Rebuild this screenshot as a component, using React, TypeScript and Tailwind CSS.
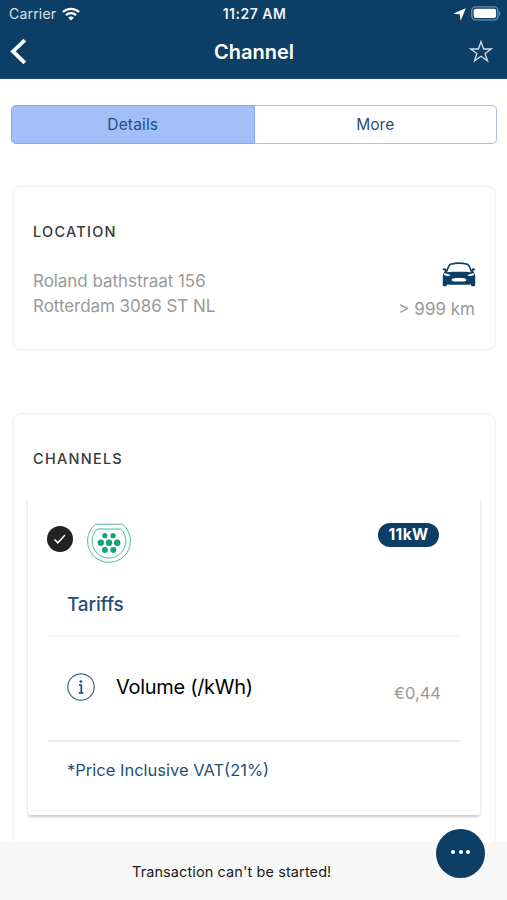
import React from 'react';

const WifiIcon = () => (
  <svg width="18" height="14" viewBox="0 0 18 14" fill="none" stroke="white" strokeWidth="2.3">
    <path d="M0.9 5C5.4 0.7 12.6 0.7 17.1 5" />
    <path d="M3.9 8.2C6.8 5.5 11.2 5.5 14.1 8.2" />
    <path d="M9 13.6L6.2 10.7C7.8 9.2 10.2 9.2 11.8 10.7Z" fill="white" stroke="none" />
  </svg>
);

const LocationArrow = () => (
  <svg width="12" height="12" viewBox="0 0 12 12" fill="white">
    <path d="M11.8 0.3L0.2 5.2V6L5.7 6.3L6.4 11.8H7.1Z" />
  </svg>
);

const BatteryIcon = () => (
  <svg width="30" height="15" viewBox="0 0 30 15" fill="none">
    <rect x="0.8" y="0.9" width="26.2" height="13" rx="3.8" stroke="#6f8da8" strokeWidth="1.4" />
    <rect x="2.7" y="2.7" width="22.4" height="9.4" rx="2" fill="white" />
    <path d="M28 5.2C29.8 5.8 29.8 9 28 9.6Z" fill="#6f8da8" />
  </svg>
);

const CarIcon = () => (
  <svg className="-mr-px" width="34" height="25" viewBox="0 0 34 25">
    <path
      d="M4.6 9.5C6 5.5 7 3 8.6 2.3C13 1.1 21 1.1 25.4 2.3C27 3 28 5.5 29.4 9.5"
      fill="none"
      stroke="#0d3e66"
      strokeWidth="1.6"
    />
    <path
      d="M0.8 7.2C1.6 6 3.4 6.1 4.2 7.2L5.2 10.2C12 9.6 22 9.6 28.8 10.2L29.8 7.2C30.6 6.1 32.4 6 33.2 7.2C33.4 8.2 31.8 8.5 30.8 8.7C32.6 10.5 33.2 12.5 33.2 15V22.8C33.2 23.8 32.6 24.3 31.6 24.3H30.6C29.6 24.3 29.1 23.8 29.1 23V22.4C22 23 12 23 4.9 22.4V23C4.9 23.8 4.4 24.3 3.4 24.3H2.4C1.4 24.3 0.8 23.8 0.8 22.8V15C0.8 12.5 1.4 10.5 3.2 8.7C2.2 8.5 0.6 8.2 0.8 7.2Z"
      fill="#0d3e66"
    />
    <path d="M2 11.2C4.5 11.3 7 12 8.6 13.6C6.4 14.3 3.8 14 1.8 12.8Z" fill="white" />
    <path d="M32 11.2C29.5 11.3 27 12 25.4 13.6C27.6 14.3 30.2 14 32.2 12.8Z" fill="white" />
    <path d="M11 16.4C14 16 20 16 23 16.4C24.8 16.9 24.8 18.7 23 19.2C20 19.7 14 19.7 11 19.2C9.2 18.7 9.2 16.9 11 16.4Z" fill="white" />
  </svg>
);

const pins = [
  { cx: 17.9, cy: 12.7, r: 2.6 },
  { cx: 26.1, cy: 12.7, r: 2.6 },
  { cx: 13.8, cy: 19.7, r: 3.2 },
  { cx: 22, cy: 19.7, r: 3.2 },
  { cx: 30.2, cy: 19.7, r: 3.2 },
  { cx: 17.9, cy: 27.1, r: 3 },
  { cx: 26.4, cy: 27.1, r: 3 },
];

const PlugIcon = () => (
  <svg width="44" height="40" viewBox="0 0 44 40" fill="none" stroke="#4dbc9c" strokeWidth="1">
    <path d="M8.6 1.2H35.4C39.6 4.4 43.4 10.4 43.4 18C43.4 30 34 39.3 22 39.3C10 39.3 0.6 30 0.6 18C0.6 10.4 4.4 4.4 8.6 1.2Z" />
    <path d="M10.2 6H33.8C36.8 9 38.8 13 38.8 18C38.8 27.5 31.5 35 22 35C12.5 35 5.2 27.5 5.2 18C5.2 13 7.2 9 10.2 6Z" />
    {pins.map((pin, i) => (
      <circle key={i} cx={pin.cx} cy={pin.cy} r={pin.r} fill="#0fa57a" stroke="none" />
    ))}
  </svg>
);

const Header = () => (
  <header className="h-[79px] shrink-0 border-b border-[#1e4b72] bg-[#0d3e66] text-white">
    <div className="grid h-[27px] grid-cols-3 items-center pr-[6px] pl-[9px]">
      <div className="flex items-center gap-[6px]">
        <span className="text-[14px] tracking-[0.2px] text-white/85">Carrier</span>
        <WifiIcon />
      </div>
      <div className="-ml-px text-center text-[14px] font-semibold tracking-[0.5px] text-white/95">11:27 AM</div>
      <div className="flex items-center justify-end gap-[5px]">
        <LocationArrow />
        <BatteryIcon />
      </div>
    </div>
    <div className="grid h-[49px] grid-cols-3 items-center px-[10px]">
      <svg width="17" height="26" viewBox="0 0 17 26" fill="none" stroke="white" strokeWidth="3.8">
        <path d="M14.8 1.2L3 12.4L14.8 23.8" />
      </svg>
      <h1 className="pl-px text-center text-[20px] font-semibold">Channel</h1>
      <svg className="mr-1 justify-self-end" width="24" height="23" viewBox="0 0 24 23" fill="none" stroke="#d5dfe7" strokeWidth="1.3">
        <path d="M12 1.6L14.6 9H22.3L16.1 13.4L18.5 20.8L12 16.3L5.5 20.8L7.9 13.4L1.7 9H9.4Z" />
      </svg>
    </div>
  </header>
);

const Tabs = () => (
  <div className="mr-[10px] ml-[11px] mt-[26px] flex h-[39px] shrink-0 rounded-[5px] text-[15.5px] text-[#24507c]">
    <button className="flex-1 rounded-l-[5px] border border-[#86a8ea] bg-[#a2bff7] tracking-[0.15px]">Details</button>
    <button className="flex-1 rounded-r-[5px] border border-l-0 border-[#a5bff3] bg-white">More</button>
  </div>
);

const LocationCard = () => (
  <section className="mr-[11px] ml-3 mt-[41px] h-[166px] shrink-0 rounded-[9px] border-2 border-[#f6f6f6] px-[19px] pt-[35px]">
    <h2 className="text-[14.5px] leading-5 font-medium tracking-[1.25px] text-[#3a3a3a]">LOCATION</h2>
    <div className="flex justify-between text-[17px] text-[#999999]">
      <p className="pt-[27px] leading-[25px] tracking-[-0.05px]">
        Roland bathstraat 156
        <br />
        Rotterdam 3086 ST NL
      </p>
      <div className="flex flex-col items-end pt-[20px]">
        <CarIcon />
        <span className="pt-[10px] leading-[25px]">&gt; 999 km</span>
      </div>
    </div>
  </section>
);

const ChannelsCard = () => (
  <section className="mr-[11px] ml-3 mt-[62px] h-[500px] shrink-0 rounded-[9px] border-2 border-[#f6f6f6] pr-[14px] pl-[14px] pt-[34px]">
    <h2 className="pl-[5px] text-[14.5px] leading-5 font-medium tracking-[1.25px] text-[#3a3a3a]">CHANNELS</h2>
    <div className="mt-[28px] h-[318px] rounded-[3px] pr-[19px] pl-5 shadow-[0_2px_3px_rgba(0,0,0,0.22)]">
      <div className="flex pt-[26px]">
        <div className="-ml-px mt-[3px] flex size-[26px] items-center justify-center rounded-full bg-[#222222]">
          <svg width="14" height="12" viewBox="0 0 14 12" fill="none" stroke="white" strokeWidth="1.5">
            <path d="M1.5 6.4L4.8 9.8L12 2" />
          </svg>
        </div>
        <div className="ml-[14px]">
          <PlugIcon />
        </div>
        <div className="mr-[22px] ml-auto flex h-6 w-[61px] items-center justify-center rounded-full bg-[#0d3e66] text-[15.5px] font-bold tracking-[0.4px] text-white">
          11kW
        </div>
      </div>
      <h3 className="mt-[28px] pl-[19px] text-[19px] leading-7 font-medium tracking-[-0.15px] text-[#24507c]">Tariffs</h3>
      <div className="mt-[16px] flex h-[107px] items-center border-y-2 border-t-[#f6f6f6] border-b-[#ebebeb] pr-5 pl-[19px]">
        <svg className="mb-[3px]" width="28" height="28" viewBox="0 0 28 28" fill="none">
          <circle cx="14" cy="14" r="13.2" stroke="#3d6690" strokeWidth="1.2" />
          <circle cx="13.9" cy="8.6" r="1.4" fill="#24507c" />
          <path d="M12 12.2H14.3V19.4M11.8 19.8H16.4" stroke="#24507c" strokeWidth="1.7" />
        </svg>
        <span className="mb-[4px] ml-[21px] text-[20px] tracking-[-0.3px] text-black">Volume (/kWh)</span>
        <span className="mt-[10px] ml-auto text-[16.5px] text-[#999999]">€0,44</span>
      </div>
      <p className="pt-[16px] pl-[19px] text-[16.5px] leading-6 text-[#24507c]">*Price Inclusive VAT(21%)</p>
    </div>
  </section>
);

const Footer = () => (
  <footer className="absolute inset-x-0 bottom-0 h-[58px] bg-[#f7f7f7]">
    <p className="pt-[20px] pl-[132px] text-[14.5px] leading-5 tracking-[0.1px] text-[#1c1c1c]">Transaction can't be started!</p>
    <button className="absolute -top-[13px] right-[22px] flex size-[49px] items-center justify-center gap-[3.5px] rounded-full bg-[#0d3e66] pb-[3px]">
      <span className="size-1 rounded-full bg-white" />
      <span className="size-1 rounded-full bg-white" />
      <span className="size-1 rounded-full bg-white" />
    </button>
  </footer>
);

const App = () => {
  return (
    <div className="relative flex h-[900px] w-[507px] flex-col overflow-hidden bg-white font-['Inter',sans-serif]">
      <Header />
      <Tabs />
      <LocationCard />
      <ChannelsCard />
      <Footer />
    </div>
  );
};

export default App;
